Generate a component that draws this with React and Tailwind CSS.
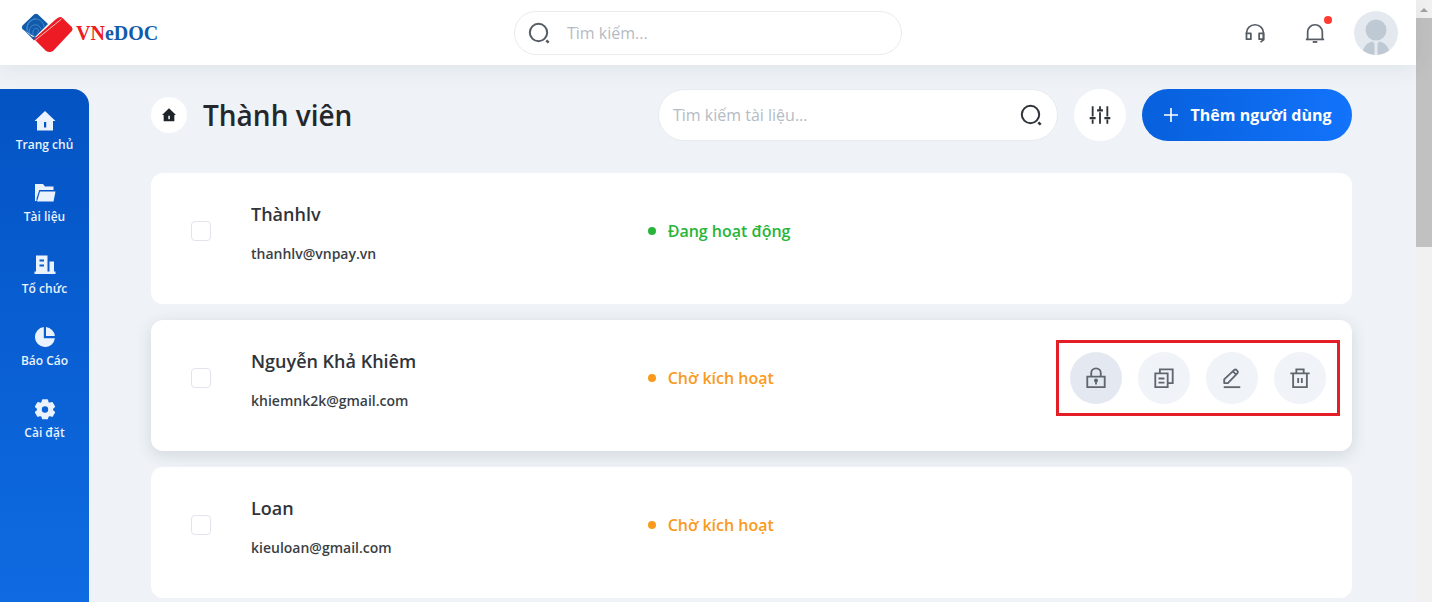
import { useState } from 'react'

const FONT = "font-['Open_Sans','Noto_Sans',sans-serif]"

const HomeIcon = ({ className }) => (
  <svg viewBox="0 0 24 24" className={className} fill="currentColor">
    <path fillRule="evenodd" d="M12 2 22.500 12H20v9.500H4V12H1.500L12 2Zm-1 11V18.500h2.200V13H11Z" />
  </svg>
)

const FolderIcon = ({ className }) => (
  <svg viewBox="0 0 24 24" className={className} fill="currentColor">
    <path d="M2 3h8l2 2.500h8.500V9H6.300L3.500 17.500V20H2V3Z" />
    <path d="M7 10.500h15.500L20.500 20.500H4L7 10.500Z" />
  </svg>
)

const OrganizationIcon = ({ className }) => (
  <svg viewBox="0 0 24 24" className={className} fill="currentColor">
    <path fillRule="evenodd" d="M3 2.500h11.500V18.500h2V8.500h4.500v10h1.500v2.500h-21v-2.500H3v-16Zm3.500 4V8.500h4.500V6.500H6.500Zm0 5v2h4.500v-2H6.500Z" />
  </svg>
)

const ReportIcon = ({ className }) => (
  <svg viewBox="0 0 24 24" className={className} fill="currentColor">
    <path d="M10.800 2.100A10 10 0 1 0 21.900 13.200H10.800V2.100Z" />
    <path d="M13 2.100v8.900h8.900A10 10 0 0 0 13 2.100Z" />
  </svg>
)

const SettingsIcon = ({ className }) => (
  <svg viewBox="0 0 24 24" className={className} fill="currentColor">
    <path
      fillRule="evenodd"
      stroke="currentColor"
      strokeWidth="1.600"
      strokeLinejoin="round"
      d="M9.800 3h4.400l.7 2.700 1.500.9 2.700-.8 2.200 3.800-2 1.900v1.900l2 1.900-2.200 3.800-2.700-.8-1.500.9-.7 2.300H9.800l-.7-2.300-1.500-.9-2.700.8-2.200-3.800 2-1.900v-1.900l-2-1.900 2.200-3.800 2.700.8 1.500-.9L9.800 3ZM12 8.500a4 4 0 1 0 0 8 4 4 0 0 0 0-8Z"
    />
  </svg>
)

const SearchIcon = ({ className }) => (
  <svg viewBox="0 0 24 24" className={className} fill="none" stroke="currentColor" strokeWidth="2">
    <circle cx="11.500" cy="11.500" r="8.700" />
    <path d="m19.300 19.300 2.400 2.400" strokeWidth="2.500" />
  </svg>
)

const HeadsetIcon = ({ className }) => (
  <svg viewBox="0 0 24 24" className={className} fill="none" stroke="currentColor" strokeWidth="1.900" strokeLinejoin="round">
    <path d="M2.700 13v-1a9.300 9 0 0 1 18.600 0v7.500l-3.300 2.500" />
    <path d="M2.700 12.500h4.800v6.300H2.700zM16.500 12.500h4.800v6.300h-4.800z" />
  </svg>
)

const BellIcon = ({ className }) => (
  <svg viewBox="0 0 24 24" className={className} fill="none" stroke="currentColor" strokeWidth="1.900">
    <path d="M4 18.500v-7.500a8 8 0 0 1 16 0v7.500" />
    <path d="M2 19h20" />
    <path d="M9.500 21.800h5" strokeWidth="2" />
  </svg>
)

const FilterIcon = ({ className }) => (
  <svg viewBox="0 0 24 24" className={className} fill="none" stroke="currentColor" strokeWidth="2">
    <path d="M4 2.500v11M4 17v4.500M12 2.500v4M12 9v12.500M20 2.500v11M20 17v4.500" />
    <path d="M.8 15.500h6.400M8.800 7h6.400M16.800 15.500h6.400" strokeWidth="2.400" />
  </svg>
)

const LockIcon = ({ className }) => (
  <svg viewBox="0 0 24 24" className={className} fill="none" stroke="currentColor" strokeWidth="2">
    <path d="M2.500 10.500h19v11.500h-19zM6.800 10.500V6.500a5.200 5 0 0 1 10.400 0v4" />
    <path d="M12 15v4" />
    <circle cx="12" cy="14.800" r="1.200" fill="currentColor" />
  </svg>
)

const CopyIcon = ({ className }) => (
  <svg viewBox="0 0 24 24" className={className} fill="none" stroke="currentColor" strokeWidth="2">
    <path d="M2.500 7h13.500v15H2.500zM7.500 7V2.500H21.500v15H16M6 12.500h6.500M6 17h6.500" />
  </svg>
)

const EditIcon = ({ className }) => (
  <svg viewBox="0 0 24 24" className={className} fill="none" stroke="currentColor" strokeWidth="2" strokeLinejoin="round">
    <path d="M3.500 17.500v-4L14.500 3.200q1.200-1 2.400.1l1 1q1.200 1.200.1 2.400L7.500 17.500H3.500ZM13 4.800l3.500 3.500" />
    <path d="M3 22h18" />
  </svg>
)

const TrashIcon = ({ className }) => (
  <svg viewBox="0 0 24 24" className={className} fill="none" stroke="currentColor" strokeWidth="2">
    <path d="M1.500 7h21M4.500 7v15h15V7M8 7V2.500h8v4.500M10 12v5.500M14 12v5.500" />
  </svg>
)

const Logo = () => (
  <a href="#" className="flex items-center">
    <svg viewBox="0 0 58 44" className="h-11 w-[58px]">
      <path d="M4.500 14.500 16 3.500q2-1.700 4 0L30 13 17 26 4.500 18.200q-1.500-1.800 0-3.700Z" fill="#125bab" />
      <path d="M14 25.500 4.500 17.500 16 29.500l3-3Z" fill="#125bab" />
      <g fill="none" stroke="#4a8fd0" strokeWidth=".8">
        <path d="M11 22a8.500 8.500 0 1 1 15-6" />
        <path d="M13 24a6 6 0 1 1 10-6" />
        <path d="M15.500 24.500c-2-4 .5-7.500 3-7s2.500 3 .5 5" />
        <path d="M9 20a11 11 0 0 1 9-12.500" />
      </g>
      <path d="m37 9 3-2.200q2.500-1.600 4.800.4l9 8.800q1.800 2 0 4L35.500 39.500q-4 3-8 0L16 28 37 9Z" fill="#ed1c24" />
      <path d="M17 29.500Q30 19 43.500 8" fill="none" stroke="#f9c9c0" strokeWidth="1" />
    </svg>
    <span className="font-['Liberation_Serif',serif] text-xl font-bold leading-6 text-[#125bab]">
      <span className="text-[#ed1c24]">VN</span>eDOC
    </span>
  </a>
)

const MENU = [
  { label: 'Trang chủ', icon: HomeIcon },
  { label: 'Tài liệu', icon: FolderIcon },
  { label: 'Tổ chức', icon: OrganizationIcon },
  { label: 'Báo Cáo', icon: ReportIcon },
  { label: 'Cài đặt', icon: SettingsIcon },
]

const ACTIONS = [
  { label: 'Khóa', icon: LockIcon, style: 'bg-[#e4e9f1]' },
  { label: 'Sao chép', icon: CopyIcon, style: 'bg-[#f0f3f7]' },
  { label: 'Chỉnh sửa', icon: EditIcon, style: 'bg-[#f0f3f7]' },
  { label: 'Xóa', icon: TrashIcon, style: 'bg-[#f0f3f7]' },
]

const STATUS = {
  active: { label: 'Đang hoạt động', text: 'text-[#28b53a]', dot: 'bg-[#28b53a]' },
  pending: { label: 'Chờ kích hoạt', text: 'text-[#fa9a1c]', dot: 'bg-[#fa9a1c]' },
}

const MEMBERS = [
  { id: 'thanhlv', name: 'Thànhlv', email: 'thanhlv@vnpay.vn', status: 'active' },
  { id: 'khiemnk', name: 'Nguyễn Khả Khiêm', email: 'khiemnk2k@gmail.com', status: 'pending', open: true },
  { id: 'kieuloan', name: 'Loan', email: 'kieuloan@gmail.com', status: 'pending' },
]

const Header = () => (
  <header className="z-10 flex h-[65px] shrink-0 items-center bg-white px-[18px] shadow-[0_2px_24px_rgba(40,60,80,0.09)]">
    <div className="flex-1">
      <Logo />
    </div>
    <div className="flex h-11 w-[388px] items-center gap-4 rounded-full border border-[#e9ebee] px-3">
      <SearchIcon className="h-6 w-6 shrink-0 text-[#565c63]" />
      <input
        type="text"
        aria-label="Tìm kiếm"
        placeholder="Tìm kiếm..."
        className="min-w-0 flex-1 text-base outline-none placeholder:text-[#b4bbc3]"
      />
    </div>
    <div className="flex flex-1 items-center justify-end">
      <button aria-label="Hỗ trợ" className="mr-[38px] text-[#565c63]">
        <HeadsetIcon className="h-[22px] w-[22px]" />
      </button>
      <button aria-label="Thông báo" className="relative mr-7 text-[#565c63]">
        <BellIcon className="h-[22px] w-[22px]" />
        <span className="absolute -right-1.5 -top-1.5 h-2 w-2 rounded-full bg-[#ff3b30]" />
      </button>
      <button aria-label="Tài khoản" className="h-11 w-11 overflow-hidden rounded-full bg-[#e4e9ef]">
        <svg viewBox="0 0 44 44" className="h-11 w-11" fill="#bfc9d3">
          <circle cx="22" cy="19" r="10.500" />
          <path d="M9 39q3-8 10-8.500L20.500 33v11H9v-5ZM35 39q-3-8-10-8.500L23.500 33v11H35v-5Z" />
        </svg>
      </button>
    </div>
  </header>
)

const Sidebar = () => (
  <aside className="mt-6 w-[89px] shrink-0 overflow-hidden rounded-tr-2xl bg-linear-to-b from-[#0453c3] to-[#0f6be2] pt-5">
    <nav className="flex flex-col gap-6">
      {MENU.map(({ label, icon: Icon }) => (
        <a key={label} href="#" className="flex flex-col items-center text-[#eaf2fd]">
          <Icon className="h-6 w-6" />
          <span className="text-xs font-semibold leading-6">{label}</span>
        </a>
      ))}
    </nav>
  </aside>
)

const Toolbar = () => (
  <div className="flex items-center gap-4">
    <a href="#" aria-label="Trang chủ" className="flex h-9 w-9 items-center justify-center rounded-full bg-white text-[#1f2429]">
      <HomeIcon className="h-4 w-4" />
    </a>
    <h1 className="flex-1 text-[28px] font-semibold leading-9 text-[#24282d]">Thành viên</h1>
    <div className="flex h-[52px] w-[400px] items-center rounded-full border border-[#e7ebef] bg-white px-[14px]">
      <input
        type="text"
        aria-label="Tìm kiếm tài liệu"
        placeholder="Tìm kiếm tài liệu..."
        className="min-w-0 flex-1 text-base outline-none placeholder:text-[#b4bbc3]"
      />
      <button aria-label="Tìm" className="text-[#2f3338]">
        <SearchIcon className="h-6 w-6" />
      </button>
    </div>
    <button aria-label="Bộ lọc" className="flex h-[52px] w-[52px] items-center justify-center rounded-full bg-white text-[#2f3338]">
      <FilterIcon className="h-[22px] w-[22px]" />
    </button>
    <button className="flex h-[52px] w-[210px] items-center justify-center gap-3 rounded-full bg-linear-to-r from-[#0760dc] to-[#1273fb] text-base font-bold text-white">
      <svg viewBox="0 0 16 16" className="h-4 w-4" fill="none" stroke="currentColor" strokeWidth="1.600">
        <path d="M8 1v14M1 8h14" />
      </svg>
      Thêm người dùng
    </button>
  </div>
)

const MemberCard = ({ member, checked, onToggle }) => {
  const status = STATUS[member.status]

  return (
    <li
      className={`grid h-[131px] shrink-0 grid-cols-[20px_34fr_66fr] items-center gap-10 rounded-xl bg-white pb-4 pl-10 pr-3 ${
        member.open ? 'shadow-[0_4px_16px_rgba(30,50,70,0.14)]' : ''
      }`}
    >
      <input
        type="checkbox"
        id={member.id}
        checked={checked}
        onChange={() => onToggle(member.id)}
        className="h-5 w-5 appearance-none rounded-sm border border-[#e1e4ea] bg-white checked:bg-[#0760dc]"
      />
      <div className="flex flex-col gap-4 pt-1.5">
        <label htmlFor={member.id} className="text-lg font-semibold leading-6 text-[#2f343a]">
          {member.name}
        </label>
        <p className="text-sm font-semibold leading-6 text-[#3a3f45]">{member.email}</p>
      </div>
      <div className="flex items-center justify-between">
        <p className={`flex items-center gap-3 text-base font-semibold ${status.text}`}>
          <span className={`h-2 w-2 rounded-full ${status.dot}`} />
          {status.label}
        </p>
        {member.open && (
          <div className="flex gap-4 border-3 border-[#e31e26] px-[11px] py-[9px]">
            {ACTIONS.map(({ label, icon: Icon, style }) => (
              <button
                key={label}
                aria-label={label}
                className={`flex h-[52px] w-[52px] items-center justify-center rounded-full text-[#5f666e] ${style}`}
              >
                <Icon className="h-[22px] w-[22px]" />
              </button>
            ))}
          </div>
        )}
      </div>
    </li>
  )
}

const App = () => {
  const [selected, setSelected] = useState([])

  const toggle = (id) =>
    setSelected((prev) => (prev.includes(id) ? prev.filter((x) => x !== id) : [...prev, id]))

  return (
    <div className={`flex h-screen overflow-hidden bg-[#eff3f7] ${FONT}`}>
      <div className="flex min-w-0 flex-1 flex-col">
        <Header />
        <div className="flex min-h-0 flex-1">
          <Sidebar />
          <main className="min-w-0 flex-1 overflow-hidden pl-[62px] pr-16 pt-6">
            <Toolbar />
            <ul className="mt-8 flex flex-col gap-4">
              {MEMBERS.map((member) => (
                <MemberCard
                  key={member.id}
                  member={member}
                  checked={selected.includes(member.id)}
                  onToggle={toggle}
                />
              ))}
            </ul>
          </main>
        </div>
      </div>

      {/* Scrollbar */}
      <div className="flex w-4 shrink-0 flex-col items-center bg-[#f1f1f1]">
        <svg viewBox="0 0 16 18" className="h-[18px] w-4" fill="#a3a3a3">
          <path d="m8 8 4 4H4z" />
        </svg>
        <div className="h-[38%] w-full bg-[#c1c1c1]" />
      </div>
    </div>
  )
}

export default App
